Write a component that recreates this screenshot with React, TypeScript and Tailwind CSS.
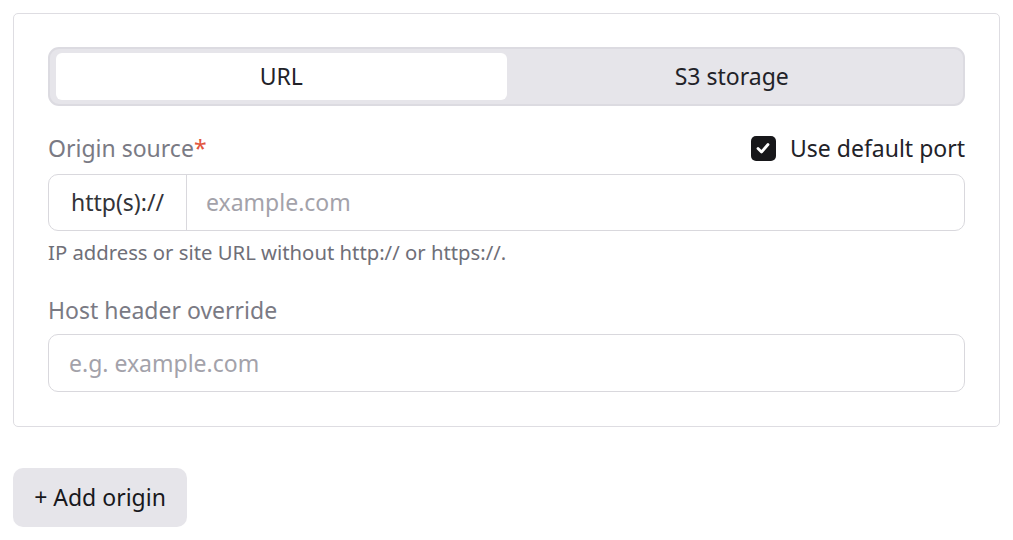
import React from "react";

export default function App() {
  return (
    <div className="w-[1013px] h-[540px] bg-white pt-[13px] pl-[13px] pr-[13px]" style={{ fontFamily: '"Noto Sans", "Open Sans", sans-serif' }}>
      <div className="w-[987px] border border-[#dedde2] rounded-[5px] pt-[33px] pb-[34px] px-[34px]">
        <div className="flex h-[59px] border-2 border-[#dcdbe1] bg-[#e6e5ea] rounded-[11px] px-[6px] py-[4px]">
          <div className="flex-1 flex items-center justify-center bg-white rounded-[6px] text-[23px] text-[#222228]">URL</div>
          <div className="flex-1 flex items-center justify-center text-[23px] text-[#222228]">S3 storage</div>
        </div>
        <div className="mt-[26px] flex items-center justify-between h-[32px]">
          <div className="text-[23px] text-[#7a7a84] leading-[32px]">
            Origin source<span className="text-[#e2553d]">*</span>
          </div>
          <label className="flex items-center gap-[14px] text-[23px] leading-[32px] text-[#222228]">
            <span className="w-[25px] h-[25px] rounded-[5px] bg-[#17171a] flex items-center justify-center">
              <svg width="16" height="16" viewBox="0 0 16 16" fill="none">
                <path d="M3 8.5 L6.5 12 L13 4.5" stroke="white" strokeWidth="2.8" strokeLinecap="round" strokeLinejoin="round" />
              </svg>
            </span>
            Use default port
          </label>
        </div>
        <div className="mt-[10px] flex h-[57px] border border-[#d9d8dd] rounded-[10px] overflow-hidden">
          <div className="w-[138px] flex items-center justify-center border-r border-[#d9d8dd] text-[23px] text-[#333338]">http(s)://</div>
          <div className="flex-1 flex items-center pl-[19px] text-[23px] text-[#a3a2aa]">example.com</div>
        </div>
        <div className="mt-[7px] text-[20.3px] leading-[28px] text-[#6f6f78]">IP address or site URL without http:// or https://.</div>
        <div className="mt-[28px] text-[23px] leading-[32px] text-[#7a7a84]">Host header override</div>
        <div className="mt-[8px] flex items-center h-[58px] border border-[#d9d8dd] rounded-[10px] pl-[20px] text-[23px] text-[#a3a2aa]">e.g. example.com</div>
      </div>
      <div className="mt-[41px] w-[174px] h-[59px] rounded-[10px] bg-[#e6e5ea] flex items-center justify-center text-[23px] text-[#18181c]">+ Add origin</div>
    </div>
  );
}
